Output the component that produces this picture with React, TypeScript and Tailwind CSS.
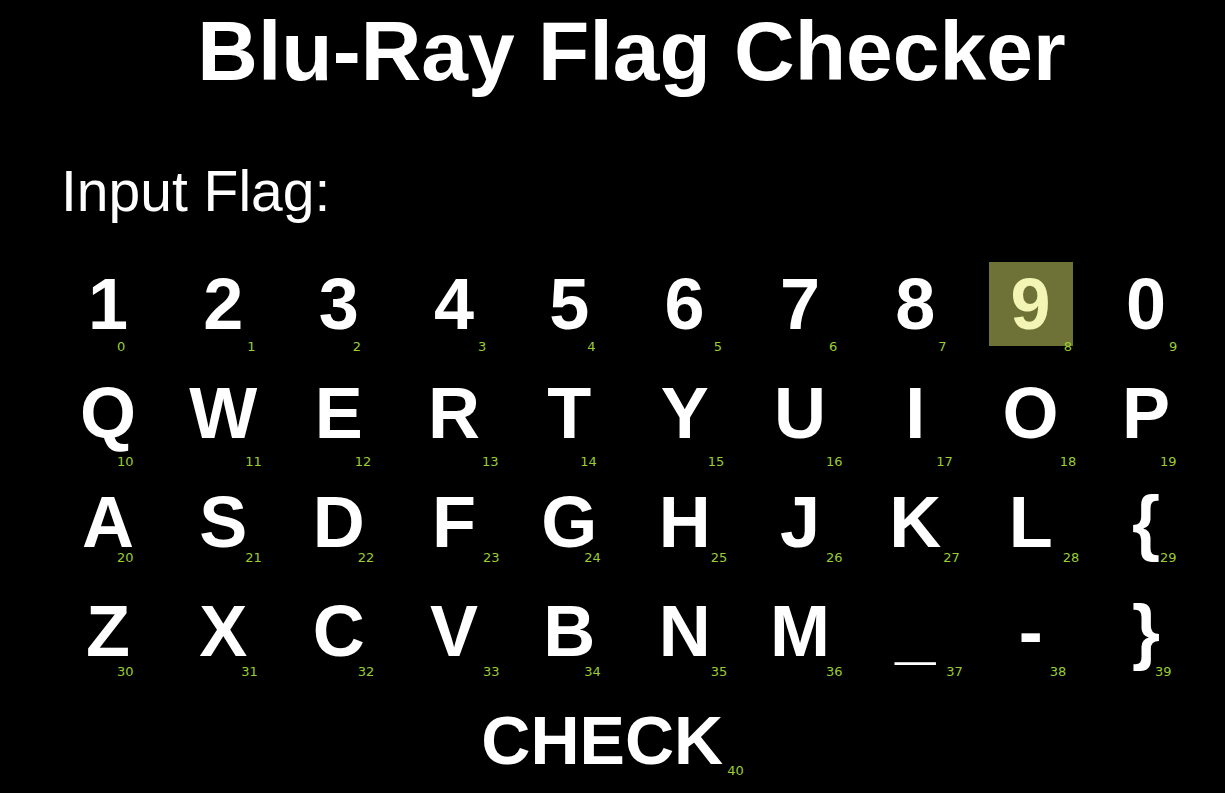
import React from "react";

const rows: string[][] = [
  ["1", "2", "3", "4", "5", "6", "7", "8", "9", "0"],
  ["Q", "W", "E", "R", "T", "Y", "U", "I", "O", "P"],
  ["A", "S", "D", "F", "G", "H", "J", "K", "L", "{"],
  ["Z", "X", "C", "V", "B", "N", "M", "_", "-", "}"],
];

// where the little index sits inside each key (px from the key's top-left)
const labelX: number[][] = [
  [51, 66, 56, 66, 60, 71, 71, 65, 75, 65],
  [51, 64, 58, 70, 53, 65, 68, 63, 71, 56],
  [51, 64, 61, 71, 57, 68, 68, 70, 74, 56],
  [51, 60, 61, 71, 57, 68, 68, 73, 61, 51],
];
const labelY = [78, 84, 71, 76];

const selected = 8;

const Key: React.FC<{ ch: string; idx: number; lx: number; ly: number }> = ({
  ch,
  idx,
  lx,
  ly,
}) => {
  const active = idx === selected;
  return (
    <div
      className={`relative w-[84px] h-[84px] flex items-center justify-center ${
        active ? "bg-[#6e7236]" : ""
      }`}
    >
      <span
        className={`text-[72px] leading-none font-bold ${
          active ? "text-[#f3f5b4]" : "text-white"
        }`}
      >
        {ch}
      </span>
      <span
        className="absolute text-[13px] leading-none text-[#9acd32] font-['DejaVu_Sans',sans-serif]"
        style={{ left: lx, top: ly }}
      >
        {idx}
      </span>
    </div>
  );
};

export default function App() {
  return (
    <div className="w-[1225px] h-[793px] bg-black overflow-hidden font-['Liberation_Sans',Arial,sans-serif] text-white">
      <h1 className="pt-[9px] pl-[38px] text-center text-[84px] leading-none font-bold">
        Blu-Ray Flag Checker
      </h1>

      <p className="mt-[70px] ml-[61px] text-[57px] leading-none">Input Flag:</p>

      <div className="mt-[42px] ml-[66px] grid grid-cols-[repeat(10,84px)] gap-x-[31.33px] gap-y-[25px]">
        {rows.map((row, r) =>
          row.map((ch, c) => (
            <Key
              key={`${r}-${c}`}
              ch={ch}
              idx={r * 10 + c}
              lx={labelX[r][c]}
              ly={labelY[r]}
            />
          ))
        )}
      </div>

      <div className="mt-[33px] flex justify-center items-end">
        <span className="text-[68px] leading-none font-bold">CHECK</span>
        <span className="ml-[4px] mb-[-3px] text-[13px] leading-none text-[#9acd32] font-['DejaVu_Sans',sans-serif]">
          40
        </span>
      </div>
    </div>
  );
}
